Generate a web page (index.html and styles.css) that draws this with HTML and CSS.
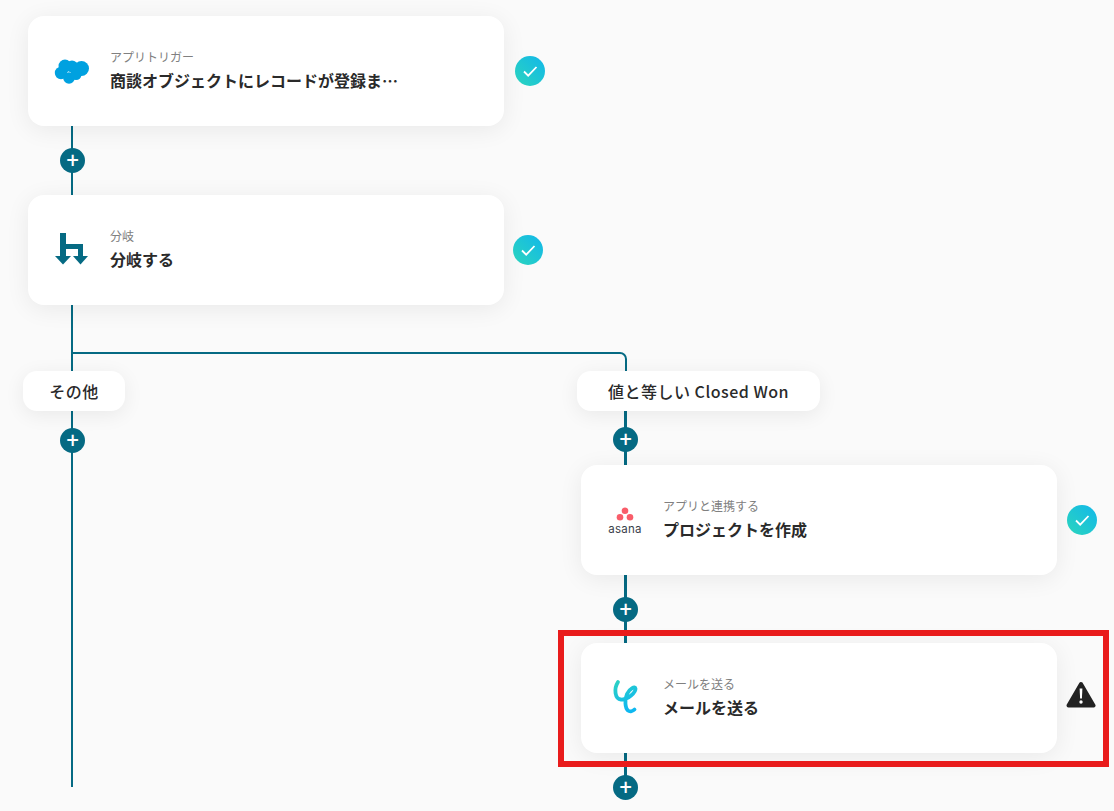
FILE: index.html
```html
<!DOCTYPE html>
<html lang="ja">
<head>
<meta charset="utf-8">
<title>Flow</title>
<link rel="stylesheet" href="styles.css">
</head>
<body>
<main class="canvas">
  <svg class="wires" width="1114" height="811" viewBox="0 0 1114 811" fill="none">
    <path d="M72 125V787" stroke="#056a83" stroke-width="2"/>
    <path d="M72 353H620a6 6 0 0 1 6 6V372" stroke="#056a83" stroke-width="2"/>
    <path d="M625.5 411V787" stroke="#056a83" stroke-width="3"/>
  </svg>

  <article class="card n1">
    <svg class="logo" width="38" height="28" viewBox="0 0 38 28"><g fill="#00a1e0"><circle cx="12" cy="9" r="6.5"/><circle cx="19" cy="9.5" r="6"/><circle cx="28.5" cy="11.5" r="7.5"/><circle cx="8" cy="16" r="6.2"/><circle cx="16" cy="21" r="5.8"/><circle cx="23" cy="17.5" r="5.5"/></g></svg>
    <div class="text"><p class="sub">アプリトリガー</p><p class="title">商談オブジェクトにレコードが登録ま…</p></div>
  </article>

  <article class="card n2">
    <svg class="logo" width="38" height="36" viewBox="0 0 38 36"><g fill="#056a83"><path d="M7 1h6v11h17v14h-5V17H13v9H7z"/><path d="M2 24h16l-8 8.500z"/><path d="M20 24h15l-7.500 8.500z"/></g></svg>
    <div class="text"><p class="sub">分岐</p><p class="title">分岐する</p></div>
  </article>

  <div class="pill p1">その他</div>
  <div class="pill p2">値と等しい Closed Won</div>

  <article class="card n3">
    <div class="logo asana">
      <svg width="20" height="14" viewBox="0 0 20 14"><g fill="#f95d6a"><circle cx="10" cy="3.800" r="3.300"/><circle cx="5" cy="10.200" r="3.300"/><circle cx="15" cy="10.200" r="3.300"/></g></svg>
      <span class="asana-word">asana</span>
    </div>
    <div class="text"><p class="sub">アプリと連携する</p><p class="title">プロジェクトを作成</p></div>
  </article>

  <article class="card n4">
    <svg class="logo" width="30" height="38" viewBox="0 0 30 38" fill="none"><defs><linearGradient id="mail" x1="0" y1="0" x2="0.400" y2="1"><stop offset="0" stop-color="#2bd1c4"/><stop offset="1" stop-color="#0fb8f0"/></linearGradient></defs><path d="M8 3C3.500 10 5 20 11 20.500C18 21 26 13 25.500 9.500C25 7 20 9 17 15C14.500 20.500 15 29 18 31.500C20 33 23 32 24.500 30.500" stroke="url(#mail)" stroke-width="3.800" stroke-linecap="round"/></svg>
    <div class="text"><p class="sub">メールを送る</p><p class="title">メールを送る</p></div>
  </article>

  <div class="highlight"></div>

  <span class="add a1">+</span>
  <span class="add a2">+</span>
  <span class="add a3">+</span>
  <span class="add a4">+</span>
  <span class="add a5">+</span>

  <svg class="check c1" width="30" height="30" viewBox="0 0 30 30"><defs><linearGradient id="ok" x1="0" y1="1" x2="1" y2="0"><stop offset="0" stop-color="#2bd5bd"/><stop offset="1" stop-color="#12b7ea"/></linearGradient></defs><circle cx="15" cy="15" r="15" fill="url(#ok)"/><path d="M9 15.500l4.200 4.200L21.500 11" stroke="#fff" stroke-width="1.800" fill="none"/></svg>
  <svg class="check c2" width="30" height="30" viewBox="0 0 30 30"><circle cx="15" cy="15" r="15" fill="url(#ok)"/><path d="M9 15.500l4.200 4.200L21.500 11" stroke="#fff" stroke-width="1.800" fill="none"/></svg>
  <svg class="check c3" width="30" height="30" viewBox="0 0 30 30"><circle cx="15" cy="15" r="15" fill="url(#ok)"/><path d="M9 15.500l4.200 4.200L21.500 11" stroke="#fff" stroke-width="1.800" fill="none"/></svg>

  <svg class="warn" width="30" height="28" viewBox="0 0 30 28"><path d="M15 3L27.500 24.500H2.500z" fill="#222" stroke="#222" stroke-width="4" stroke-linejoin="round"/><path d="M13.600 7.500h2.800l-.5 10h-1.800z" fill="#fff"/><circle cx="15" cy="21" r="1.700" fill="#fff"/></svg>
</main>
</body>
</html>
```
FILE: styles.css
```css
* { box-sizing: border-box; }
html, body { margin: 0; height: 100%; }
body {
  background: #fafafa;
  color: #2a2a2a;
  font-family: "Noto Sans CJK JP", "Noto Sans", sans-serif;
  overflow: hidden;
}
p { margin: 0; }
.canvas { position: relative; width: 1114px; height: 811px; overflow: hidden; }
.wires { position: absolute; left: 0; top: 0; }

.card {
  position: absolute;
  width: 476px;
  height: 110px;
  display: flex;
  align-items: center;
  background: #fff;
  border-radius: 16px;
  box-shadow: 0 4px 24px rgba(0, 0, 0, 0.07);
}
.n1 { left: 28px; top: 16px; }
.n2 { left: 28px; top: 195px; }
.n3 { left: 581px; top: 465px; }
.n4 { left: 581px; top: 643px; }

.logo { flex: none; margin-left: 25px; width: 38px; }
.n4 .logo { margin-left: 29px; width: 30px; margin-right: 4px; }
.text { margin-left: 19px; margin-top: -2px; min-width: 0; }
.sub { font-size: 12px; line-height: 18px; color: #808080; }
.title { font-size: 16px; line-height: 24px; font-weight: 700; color: #2a2a2a; margin-top: 2px; }

.asana { display: flex; flex-direction: column; align-items: center; width: 38px; margin-left: 25px; margin-top: 2px; }
.asana svg { display: block; }
.asana-word { font-family: "Inter", sans-serif; font-size: 11.500px; line-height: 12px; color: #3a3f4b; letter-spacing: 0.300px; margin-top: 2px; }

.pill {
  position: absolute;
  top: 371px;
  height: 40px;
  display: flex;
  align-items: center;
  justify-content: center;
  background: #fff;
  border-radius: 14px;
  box-shadow: 0 4px 20px rgba(0, 0, 0, 0.07);
  font-size: 16px;
  font-weight: 500;
  letter-spacing: 0.500px;
  color: #2a2a2a;
}
.p1 { left: 23px; width: 102px; }
.p2 { left: 577px; width: 243px; }

.add {
  position: absolute;
  width: 25px;
  height: 25px;
  display: flex;
  align-items: center;
  justify-content: center;
  border-radius: 50%;
  background: #056a83;
  color: #fff;
  font-family: "DejaVu Sans", sans-serif;
  font-size: 17px;
  font-weight: 700;
  line-height: 1;
}
.a1 { left: 60px; top: 148px; }
.a2 { left: 60px; top: 428px; }
.a3 { left: 613px; top: 427px; }
.a4 { left: 613px; top: 597px; }
.a5 { left: 613px; top: 775px; }

.check, .warn { position: absolute; }
.c1 { left: 515px; top: 56px; }
.c2 { left: 513px; top: 235px; }
.c3 { left: 1067px; top: 505px; }
.warn { left: 1066px; top: 681px; }

.highlight {
  position: absolute;
  left: 558px;
  top: 630px;
  width: 551px;
  height: 137px;
  border: 6px solid #e91c1c;
}
```
